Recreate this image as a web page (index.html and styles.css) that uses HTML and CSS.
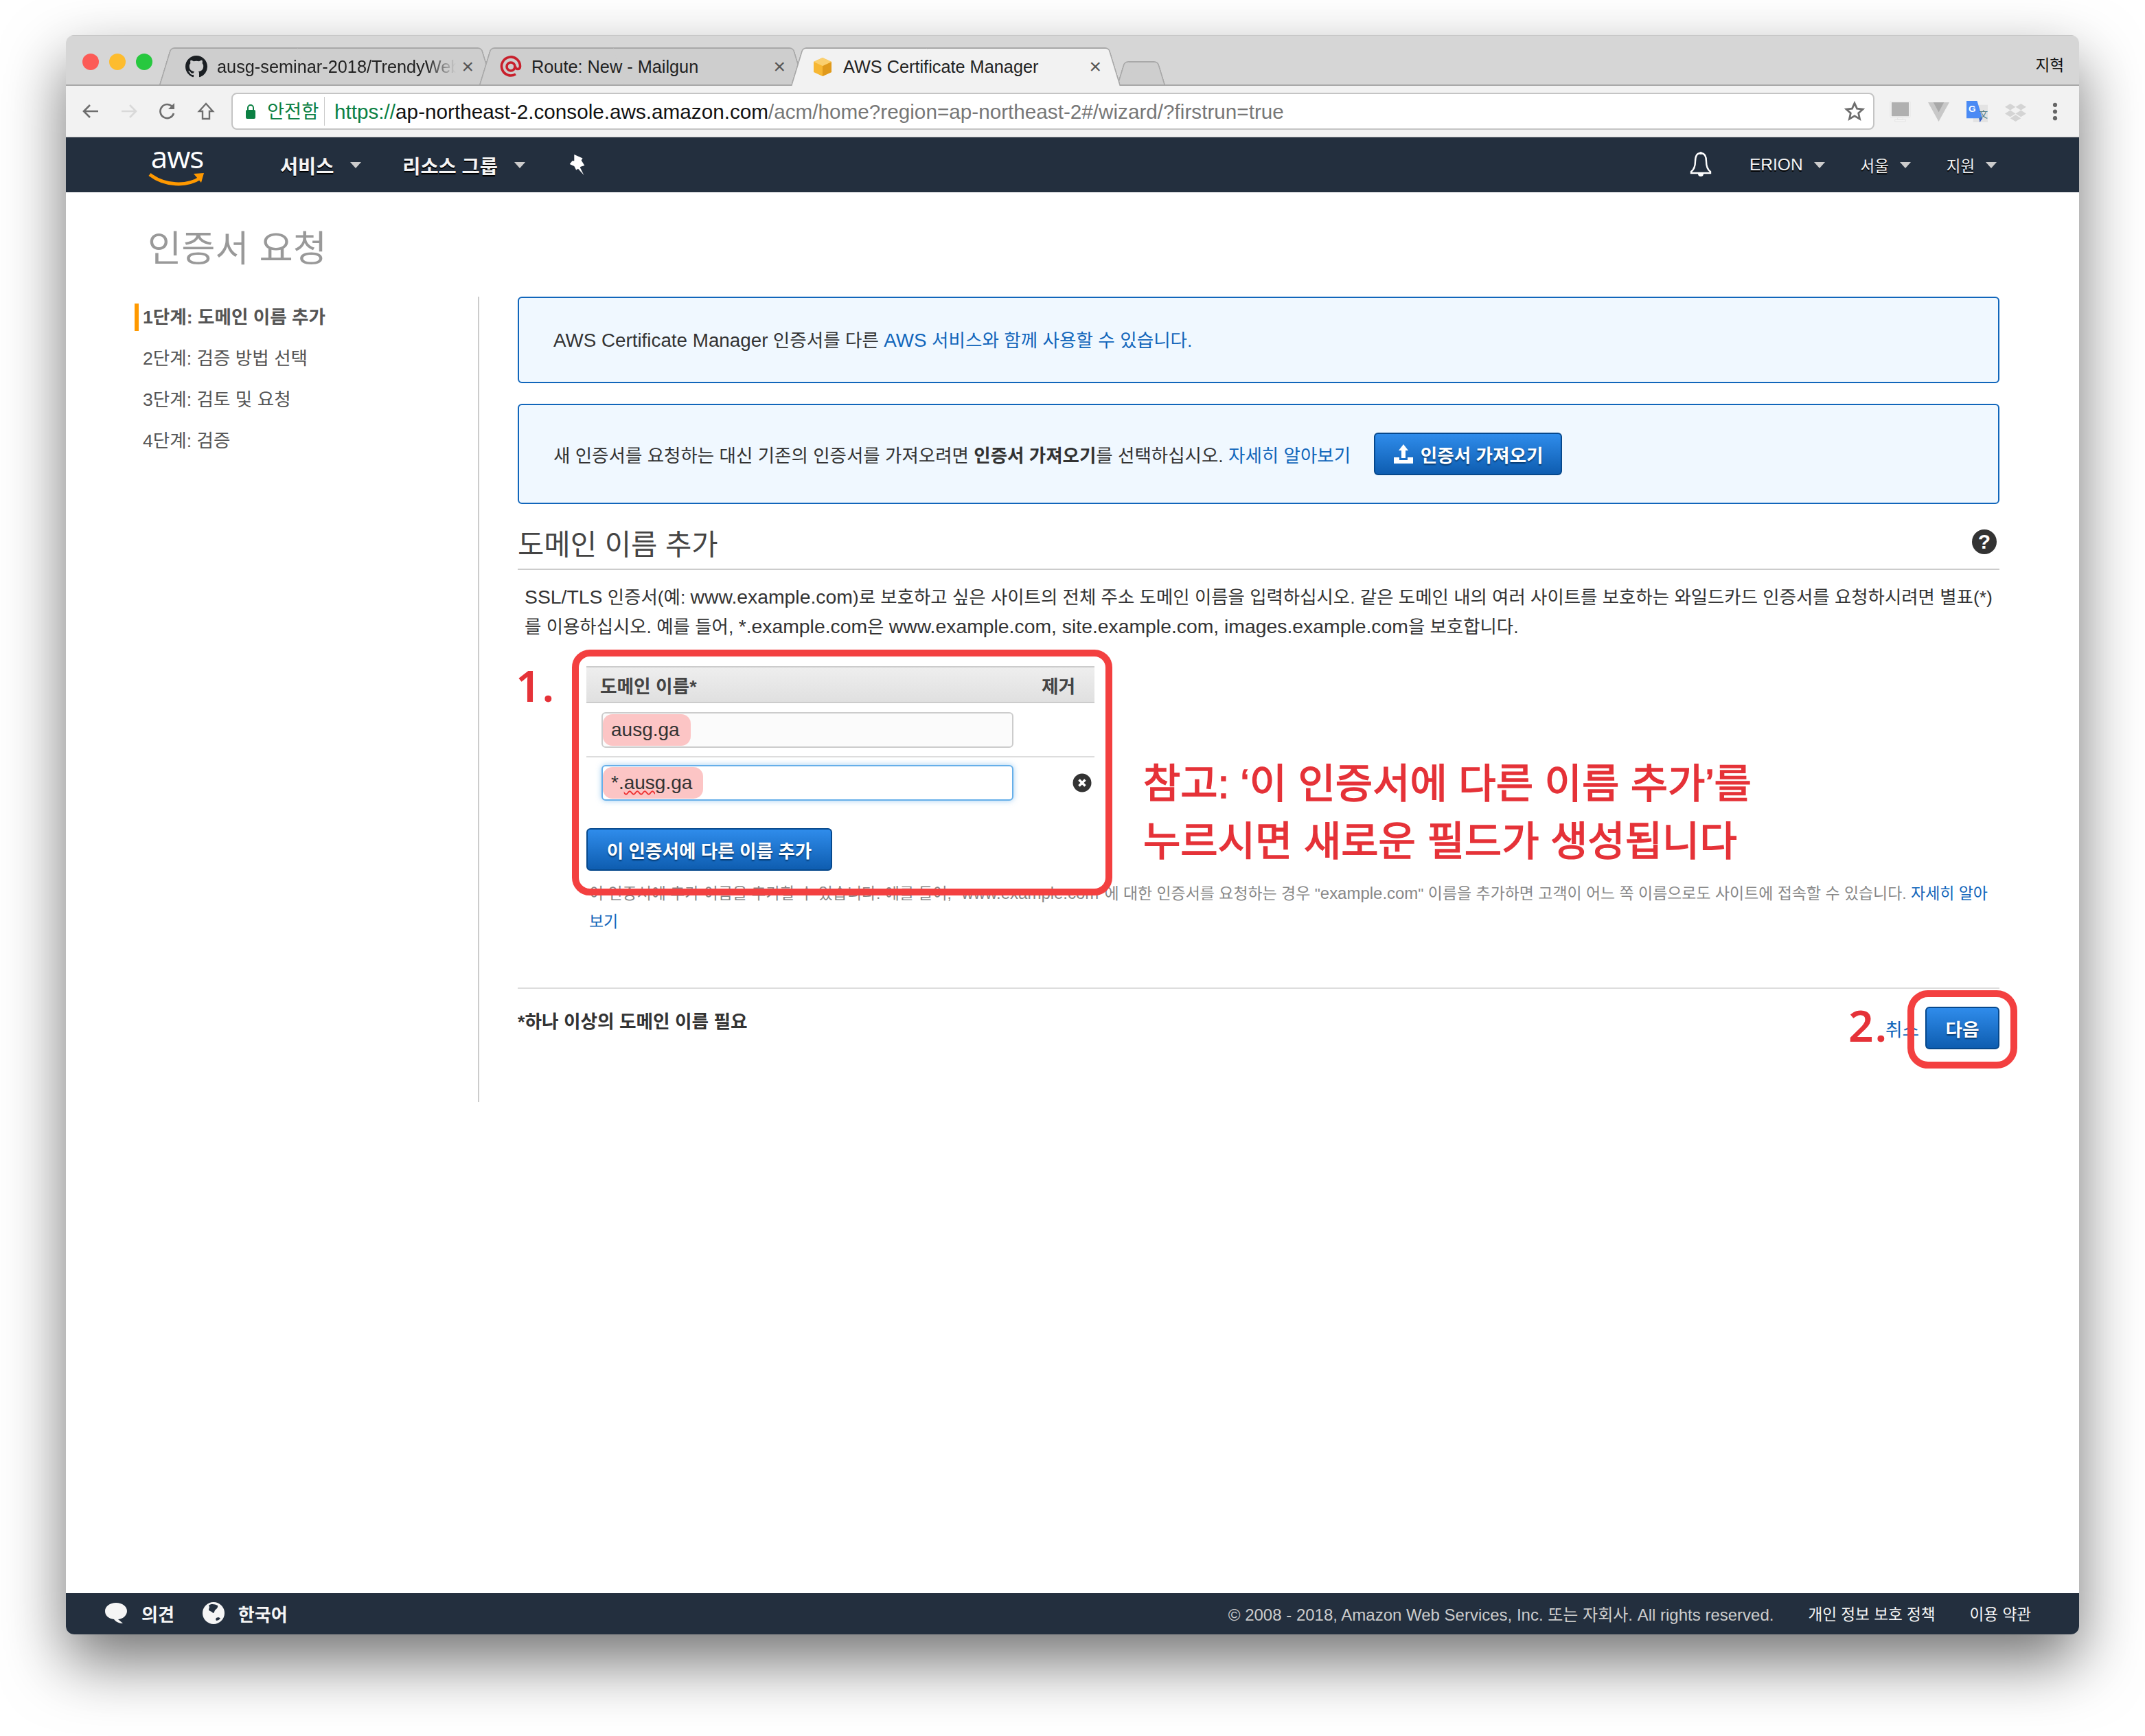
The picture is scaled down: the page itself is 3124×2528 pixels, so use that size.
FILE: index.html
```html
<!DOCTYPE html>
<html lang="ko">
<head>
  <meta charset="UTF-8" />
  <title>인증서 요청</title>
  <link rel="stylesheet" href="styles.css">
</head>
<body>

<div class="window">

  <div class="tabstrip">
    <span class="light red"></span><span class="light yellow"></span><span class="light green"></span>
    <div class="tab tab-one">
      <svg class="favicon" viewBox="0 0 16 16"><path fill="#1b1f23" d="M8 0C3.58 0 0 3.58 0 8c0 3.54 2.29 6.53 5.47 7.59.4.07.55-.17.55-.38v-1.34c-2.23.48-2.7-1.07-2.7-1.07-.36-.92-.89-1.17-.89-1.17-.73-.5.05-.49.05-.49.8.06 1.23.83 1.23.83.71 1.22 1.87.87 2.33.66.07-.52.28-.87.5-1.07-1.78-.2-3.64-.89-3.64-3.95 0-.87.31-1.59.82-2.15-.08-.2-.36-1.02.08-2.12 0 0 .67-.21 2.2.82a7.6 7.6 0 0 1 4 0c1.53-1.04 2.2-.82 2.2-.82.44 1.1.16 1.92.08 2.12.51.56.82 1.27.82 2.15 0 3.07-1.87 3.75-3.65 3.95.29.25.54.73.54 1.48v2.2c0 .21.15.46.55.38A8 8 0 0 0 16 8c0-4.42-3.58-8-8-8z"/></svg>
      <span class="tab-title fade">ausg-seminar-2018/TrendyWeb</span>
      <span class="tab-close">×</span>
    </div>
    <div class="tab tab-two">
      <svg class="favicon" viewBox="0 0 32 32"><path d="M23 27a13.500 13.500 0 1 1 6.500-11.500c0 2.500-1.500 4-3.500 4s-3.500-1.500-3.500-4" fill="none" stroke="#c8202c" stroke-width="3.600"/><circle cx="16" cy="16" r="6" fill="none" stroke="#c8202c" stroke-width="3.600"/></svg>
      <span class="tab-title">Route: New - Mailgun</span>
      <span class="tab-close">×</span>
    </div>
    <div class="tab tab-active">
      <svg class="favicon" viewBox="0 0 32 32"><path fill="#f7b733" d="M16 3 29 9v15l-13 6-13-6V9z"/><path fill="#e09a1c" d="M16 15v15l13-6V9z"/><path fill="#fbd06f" d="M16 3 29 9l-13 6L3 9z"/></svg>
      <span class="tab-title">AWS Certificate Manager</span>
      <span class="tab-close">×</span>
    </div>
    <div class="tab tab-new"></div>
    <span class="profile">지혁</span>
  </div>

  <div class="toolbar">
    <div class="nav-icons">
      <svg viewBox="0 0 28 28"><path d="M25 14H5M13 5l-9 9 9 9" fill="none" stroke="#6e6e6e" stroke-width="2.600"/></svg>
      <svg viewBox="0 0 28 28"><path d="M3 14h20M15 5l9 9-9 9" fill="none" stroke="#d9d9d9" stroke-width="2.600"/></svg>
      <svg viewBox="0 0 28 28"><path d="M23 17a10 10 0 1 1-2-9.500" fill="none" stroke="#6e6e6e" stroke-width="2.600"/><path d="M24 2v9h-9z" fill="#6e6e6e"/></svg>
      <svg viewBox="0 0 28 28"><path d="M14 3 4 14h5v11h10V14h5z" fill="none" stroke="#6e6e6e" stroke-width="2.400"/></svg>
    </div>
    <div class="omnibox">
      <svg class="lock" viewBox="0 0 16 24"><path d="M4 11V7a4 4 0 0 1 8 0v4" fill="none" stroke="#0b8043" stroke-width="2"/><rect x="1" y="10" width="14" height="13" rx="2" fill="#0b8043"/></svg>
      <span class="secure">안전함</span>
      <span class="url"><span class="scheme">https://</span><span class="host">ap-northeast-2.console.aws.amazon.com</span><span class="path">/acm/home?region=ap-northeast-2#/wizard/?firstrun=true</span></span>
      <svg class="star" viewBox="0 0 28 28"><path d="M14 3l3.300 7.400 8 .8-6 5.400 1.700 7.900-7-4.100-7 4.100 1.700-7.900-6-5.400 8-.8z" fill="none" stroke="#6e6e6e" stroke-width="2.600"/></svg>
    </div>
    <div class="extensions">
      <svg viewBox="0 0 32 32"><rect x="1" y="0" width="30" height="25" rx="2" fill="#f7f7f7" stroke="#e4e4e4"/><rect x="3" y="2" width="26" height="21" fill="#b0b0b0"/><path d="M12 25h8v3h-8zM8 28h16v3H8z" fill="#f4f4f4" stroke="#e4e4e4"/></svg>
      <svg viewBox="0 0 32 32"><path d="M0 2h32L16 31z" fill="#c8c8c8"/><path d="M8 2h16l-8 15z" fill="#a8a8a8"/></svg>
      <svg viewBox="0 0 32 32"><path d="M10 6h22v26H10z" fill="#e3e3e3"/><path d="M0 0h16l8 26-4 6-1-6H0z" fill="#4a8af4"/><path d="M19 26h5l-4 6z" fill="#3b5fc4"/><text x="3" y="17" class="ext-g">G</text><text x="19" y="25" class="ext-wen">文</text></svg>
      <svg viewBox="0 0 32 32"><path d="M8 4l8 5-8 5-8-5zM24 4l8 5-8 5-8-5zM8 14l8 5-8 5-8-5zM24 14l8 5-8 5-8-5zM16 21l8 5-8 5-8-5z" fill="#d4d4d4"/></svg>
      <svg class="dots" viewBox="0 0 8 32"><circle cx="4" cy="6" r="3.200" fill="#666"/><circle cx="4" cy="16" r="3.200" fill="#666"/><circle cx="4" cy="26" r="3.200" fill="#666"/></svg>
    </div>
  </div>

  <div class="navbar">
    <div class="aws-logo">
      <span class="aws-word">aws</span>
      <svg viewBox="0 0 84 24"><path d="M2 4c22 17 54 18 74 5" fill="none" stroke="#f90" stroke-width="5"/><path d="M66 3l15-1-4 14z" fill="#f90"/></svg>
    </div>
    <a class="nav-item services">서비스<i class="caret"></i></a>
    <a class="nav-item groups">리소스 그룹<i class="caret"></i></a>
    <svg class="pin" viewBox="0 0 28 34"><path d="M9 1l13 6-2 3 5 8-6 2-1 1 6 12-9-10-3 2-3-6-7-3 4-5 3 0z" fill="#fff"/></svg>
    <div class="nav-right">
      <svg class="bell" viewBox="0 0 34 40"><path d="M17 3c-6 0-8 5-8 12 0 8-2 12-6 15v2h28v-2c-4-3-6-7-6-15 0-7-2-12-8-12z" fill="none" stroke="#fff" stroke-width="2.400"/><path d="M13 33a4 4 0 0 0 8 0z" fill="#fff"/><circle cx="17" cy="3" r="2" fill="#fff"/></svg>
      <a class="nav-item small erion">ERION<i class="caret"></i></a>
      <a class="nav-item small seoul">서울<i class="caret"></i></a>
      <a class="nav-item small support">지원<i class="caret"></i></a>
    </div>
  </div>

  <div class="main">
    <h1 class="page-title">인증서 요청</h1>

    <div class="wizard">
      <ul class="steps">
        <li class="step current">1단계: 도메인 이름 추가</li>
        <li class="step">2단계: 검증 방법 선택</li>
        <li class="step">3단계: 검토 및 요청</li>
        <li class="step">4단계: 검증</li>
      </ul>

      <div class="content">
        <div class="alert alert-first">
          <p><span class="en">AWS Certificate Manager</span> 인증서를 다른 <a><span class="en">AWS</span> 서비스와 함께 사용할 수 있습니다.</a></p>
        </div>
        <div class="alert alert-second">
          <p>새 인증서를 요청하는 대신 기존의 인증서를 가져오려면 <strong>인증서 가져오기</strong>를 선택하십시오. <a>자세히 알아보기</a></p>
          <button class="btn btn-import">
            <svg viewBox="0 0 30 30"><path d="M15 1l7 9h-4v11h-6V10H8z" fill="#fff"/><path d="M1 20h8v4h12v-4h8v9H1z" fill="#fff"/></svg>
            인증서 가져오기
          </button>
        </div>

        <div class="section-head">
          <h2>도메인 이름 추가</h2>
          <span class="help">?</span>
        </div>
        <p class="intro"><span class="en">SSL/TLS</span> 인증서(예: <span class="en">www.example.com</span>)로 보호하고 싶은 사이트의 전체 주소 도메인 이름을 입력하십시오. 같은 도메인 내의 여러 사이트를 보호하는 와일드카드 인증서를 요청하시려면 별표(*)<br>를 이용하십시오. 예를 들어, <span class="en">*.example.com</span>은 <span class="en">www.example.com, site.example.com, images.example.com</span>을 보호합니다.</p>

        <div class="domains">
          <div class="domains-head"><span>도메인 이름*</span><span>제거</span></div>
          <div class="domain-row">
            <div class="field"><span class="mark">ausg.ga</span></div>
          </div>
          <div class="domain-row last">
            <div class="field focused"><span class="mark"><span>*.</span><span class="spell">ausg</span><span>.ga</span></span></div>
            <svg class="remove" viewBox="0 0 28 28"><circle cx="14" cy="14" r="13.500" fill="#333"/><path d="M9.500 9.500l9 9m0-9l-9 9" stroke="#fff" stroke-width="3.600"/></svg>
          </div>
          <button class="btn btn-add">이 인증서에 다른 이름 추가</button>
        </div>

        <p class="hint">이 인증서에 추가 이름을 추가할 수 있습니다. 예를 들어, "<span class="en">www.example.com</span>"에 대한 인증서를 요청하는 경우 "<span class="en">example.com</span>" 이름을 추가하면 고객이 어느 쪽 이름으로도 사이트에 접속할 수 있습니다. <a>자세히 알아<br>보기</a></p>

        <div class="actions">
          <span class="required">*하나 이상의 도메인 이름 필요</span>
          <div class="action-btns">
            <a class="cancel">취소</a>
            <button class="btn btn-next">다음</button>
          </div>
        </div>
      </div>
    </div>

    <div class="callout callout-form"></div>
    <div class="callout callout-next"></div>
    <span class="num num-one">1.</span>
    <span class="num num-two">2.</span>
    <p class="note">참고: ‘이 인증서에 다른 이름 추가’를<br>누르시면 새로운 필드가 생성됩니다</p>
  </div>

  <div class="footer">
    <svg class="foot-icon" viewBox="0 0 34 32"><path d="M17 1c9 0 16 5 16 12s-7 12-13 12l7 6c-5 0-10-2-13-6C6 24 1 20 1 13 1 6 8 1 17 1z" fill="#f5f5f5"/></svg>
    <span class="foot-label feedback">의견</span>
    <svg class="foot-icon globe" viewBox="0 0 32 32"><circle cx="16" cy="16" r="16" fill="#f5f5f5"/><path d="M9 5c3-3 9-2 13 0 1 3-2 5-4 7-1 2-1 4-3 4-1-3-5-2-6-5 0-2 2-3 0-6zM20 23c2-1 5-1 6 1-2 2-4 3-6 3-1-1-1-3 0-4z" fill="#232f3e"/></svg>
    <span class="foot-label">한국어</span>
    <span class="copyright">© 2008 - 2018, Amazon Web Services, Inc. 또는 자회사. All rights reserved.</span>
    <a class="foot-link privacy">개인 정보 보호 정책</a>
    <a class="foot-link">이용 약관</a>
  </div>

</div>

</body>
</html>
```

FILE: styles.css
```css
* {
  box-sizing: border-box;
}
html, body {
  margin: 0;
  background: #fff;
}
body {
  height: 2528px;
  padding: 51px 96px 0 96px;
  overflow: hidden;
  font-family: "Liberation Sans", "Noto Sans CJK KR", sans-serif;
  color: #444;
}
p, h1, h2, ul {
  margin: 0;
  padding: 0;
}
a {
  color: #1166bb;
}

/* browser window */
.window {
  width: 2932px;
  height: 2329px;
  display: flex;
  flex-direction: column;
  border-radius: 12px;
  overflow: hidden;
  box-shadow: 0 40px 90px rgba(0, 0, 0, .55);
}
.tabstrip {
  height: 74px;
  flex: none;
  display: flex;
  align-items: flex-end;
  padding-left: 24px;
  background: #d6d6d6;
  border-top: 1px solid #c4c4c4;
  border-bottom: 2px solid #a8a8a8;
  position: relative;
}
.light {
  width: 24px;
  height: 24px;
  border-radius: 50%;
  margin: 0 15px 21px 0;
}
.red { background: #fc5b57; }
.yellow { background: #fdbc2e; }
.green { background: #27c83f; margin-right: 0; }
.tab {
  position: relative;
  height: 56px;
  margin-bottom: -2px;
  display: flex;
  align-items: center;
  font-size: 25.300px;
  color: #222;
  padding: 0 28px 0 30px;
}
.tab::before,
.tab::after {
  content: "";
  position: absolute;
  top: 0;
  bottom: 2px;
  width: 55%;
  background: #cecece;
  border-top: 2px solid #a8a8a8;
  z-index: 0;
}
.tab::before {
  left: 8px;
  transform: skewX(-17deg);
  border-left: 2px solid #a8a8a8;
  border-radius: 6px 0 0 0;
}
.tab::after {
  right: 8px;
  transform: skewX(17deg);
  border-right: 2px solid #a8a8a8;
  border-radius: 0 6px 0 0;
}
.tab > * {
  position: relative;
  z-index: 1;
}
.tab-one {
  width: 486px;
  margin-left: 10px;
  padding-left: 38px;
}
.tab-two {
  width: 474px;
  margin-left: -20px;
}
.tab-active {
  width: 480px;
  margin-left: -20px;
  z-index: 2;
}
.tab-active::before,
.tab-active::after {
  background: #f2f2f2;
  bottom: 0;
}
.tab-new {
  width: 76px;
  height: 36px;
  margin-left: -8px;
  padding: 0;
}
.favicon {
  width: 32px;
  height: 32px;
  flex: none;
  margin-right: 14px;
}
.tab-title {
  flex: 1;
  white-space: nowrap;
  overflow: hidden;
}
.fade {
  -webkit-mask-image: linear-gradient(to right, #000 88%, transparent);
  mask-image: linear-gradient(to right, #000 88%, transparent);
}
.tab-close {
  width: 26px;
  text-align: right;
  font-size: 30px;
  color: #555;
}
.profile {
  position: absolute;
  right: 22px;
  top: 25px;
  font-size: 22.600px;
  color: #111;
}

/* toolbar */
.toolbar {
  height: 74px;
  flex: none;
  display: flex;
  align-items: center;
  background: #f2f2f2;
}
.nav-icons {
  width: 241px;
  display: flex;
  gap: 28px;
  padding-left: 22px;
}
.nav-icons svg {
  width: 28px;
  height: 28px;
}
.omnibox {
  width: 2393px;
  height: 54px;
  display: flex;
  align-items: center;
  background: #fff;
  border: 2px solid #c4c4c4;
  border-radius: 8px;
  padding-left: 18px;
  font-size: 29.700px;
}
.lock {
  width: 16px;
  height: 24px;
  margin-right: 16px;
}
.secure {
  color: #0b8043;
  width: 84px;
  height: 42px;
  line-height: 43px;
  font-size: 27.300px;
  border-right: 1px solid #ccc;
}
.url {
  flex: 1;
  margin-left: 14px;
  padding-top: 2px;
  white-space: nowrap;
}
.scheme { color: #0b8043; }
.host { color: #111; }
.path { color: #777; }
.star {
  width: 30px;
  height: 30px;
  margin-right: 12px;
}
.extensions {
  flex: 1;
  display: flex;
  align-items: center;
  gap: 25px;
  padding-left: 22px;
}
.extensions svg {
  width: 31px;
  height: 31px;
}
.extensions .dots {
  width: 8px;
  margin-left: 13px;
}
.ext-g {
  font: bold 14px "Liberation Sans", sans-serif;
  fill: #fff;
}
.ext-wen {
  font: 13px "Noto Sans CJK KR", sans-serif;
  fill: #55808a;
}

/* aws navbar */
.navbar {
  height: 81px;
  flex: none;
  display: flex;
  align-items: center;
  background: #232f3e;
  border-top: 1px solid #d0d0d0;
  padding-left: 120px;
  position: relative;
}
.aws-logo {
  width: 84px;
  height: 68px;
  display: flex;
  flex-direction: column;
  align-items: center;
  color: #fff;
}
.aws-word {
  font: 44px/44px "Open Sans", sans-serif;
  letter-spacing: -1px;
}
.aws-logo svg {
  width: 84px;
  height: 24px;
}
.nav-item {
  color: #f5f5f5;
  font-size: 28.400px;
  font-weight: bold;
  text-shadow: 0 2px 0 #000;
  display: flex;
  align-items: center;
  white-space: nowrap;
}
.caret {
  display: inline-block;
  width: 0;
  height: 0;
  margin-left: 24px;
  border-left: 8px solid transparent;
  border-right: 8px solid transparent;
  border-top: 9px solid #ccc;
}
.services { margin-left: 108px; }
.groups { margin-left: 60px; }
.pin {
  width: 28px;
  height: 32px;
  margin-left: 62px;
}
.nav-right {
  margin-left: auto;
  display: flex;
  align-items: center;
  padding-right: 120px;
}
.bell {
  width: 34px;
  height: 40px;
  margin-right: 54px;
}
.nav-item.small {
  font-size: 22.400px;
  font-weight: normal;
}
.nav-item.small .caret {
  margin-left: 16px;
}
.nav-item.erion {
  font-size: 24.500px;
}
.seoul,
.support { margin-left: 52px; }

/* page */
.main {
  flex: 1;
  position: relative;
  background: #fff;
}
.page-title {
  padding: 53px 0 0 119px;
  height: 152px;
  font-size: 53.500px;
  line-height: 60px;
  font-weight: normal;
  color: #999;
}
.wizard {
  display: flex;
  align-items: flex-start;
}
.steps {
  width: 602px;
  height: 1173px;
  flex: none;
  list-style: none;
  border-right: 2px solid #ccc;
  padding: 8px 0 0 100px;
}
.step {
  height: 60px;
  line-height: 40px;
  padding: 0 0 0 12px;
  font-size: 26.600px;
  color: #555;
}
.step.current {
  font-weight: bold;
  border-left: 6px solid #f90;
  height: 40px;
  padding-left: 6px;
  margin-bottom: 20px;
  margin-top: 2px;
}
.content {
  width: 2158px;
  margin-left: 56px;
}
.en {
  font-size: 1.045em;
}
.alert {
  display: flex;
  align-items: center;
  background: #f0f8ff;
  border: 2px solid #1166bb;
  border-radius: 6px;
  padding: 0 50px;
  font-size: 26.600px;
  color: #333;
}
.alert-first {
  height: 126px;
  margin-bottom: 30px;
  padding-bottom: 4px;
}
.alert-second {
  height: 146px;
  font-size: 26.500px;
}
.btn {
  display: inline-flex;
  align-items: center;
  justify-content: center;
  border: 2px solid #06488c;
  border-radius: 6px;
  background: linear-gradient(#2f8ceb, #0e5db0);
  color: #fff;
  font: bold 26.600px "Liberation Sans", "Noto Sans CJK KR", sans-serif;
  text-shadow: 0 2px 2px #063a70;
  padding: 0;
}
.btn-import {
  width: 274px;
  height: 62px;
  margin-left: 34px;
  gap: 10px;
}
.btn-import svg {
  width: 30px;
  height: 30px;
}
.section-head {
  height: 96px;
  display: flex;
  align-items: flex-end;
  justify-content: space-between;
  border-bottom: 2px solid #ccc;
  padding: 0 4px 4px 0;
}
.section-head h2 {
  font-size: 41.700px;
  line-height: 60px;
  font-weight: normal;
  color: #444;
}
.help {
  width: 36px;
  height: 36px;
  border-radius: 50%;
  background: #333;
  color: #fff;
  font-size: 30px;
  font-weight: bold;
  line-height: 36px;
  text-align: center;
  margin-bottom: 17px;
}
.intro {
  margin-top: 18px;
  padding: 0 0 0 10px;
  font-size: 26.450px;
  line-height: 42px;
  color: #333;
  white-space: nowrap;
}
.intro .en {
  font-size: 1.072em;
}
.domains {
  width: 740px;
  margin: 36px 0 0 100px;
}
.domains-head {
  height: 54px;
  display: flex;
  align-items: center;
  justify-content: space-between;
  padding: 0 28px 0 20px;
  background: linear-gradient(#eeeeee, #e0e0e0);
  border-top: 2px solid #ccc;
  border-bottom: 2px solid #ccc;
  font-size: 26.700px;
  font-weight: bold;
  color: #444;
}
.domain-row {
  height: 79px;
  display: flex;
  align-items: center;
  padding: 0 0 0 22px;
  border-bottom: 2px solid #ddd;
  position: relative;
}
.domain-row.last {
  border-bottom: 0;
  height: 74px;
}
.field {
  width: 600px;
  height: 52px;
  display: flex;
  align-items: center;
  padding-left: 0;
  background: #fbfbfb;
  border: 2px solid #ccc;
  border-radius: 6px;
}
.field.focused {
  background: #fff;
  border-color: #66afe9;
  box-shadow: 0 0 8px rgba(102, 175, 233, .6);
}
.mark {
  height: 46px;
  line-height: 46px;
  padding: 0 16px 0 12px;
  background: #fcc5c5;
  border-radius: 14px;
  font-size: 28px;
  color: #333;
  white-space: nowrap;
}
.spell {
  text-decoration: underline wavy #e33 2px;
  text-underline-offset: 2px;
}
.remove {
  position: absolute;
  left: 708px;
  top: 23px;
  width: 28px;
  height: 28px;
}
.btn-add {
  width: 358px;
  height: 62px;
  margin-top: 29px;
}
.hint {
  margin: 12px 0 0 104px;
  font-size: 22.950px;
  line-height: 41px;
  color: #888;
  white-space: nowrap;
}
.actions {
  margin-top: 75px;
  border-top: 2px solid #ddd;
  display: flex;
  justify-content: space-between;
  padding-top: 26px;
}
.required {
  font-size: 26.700px;
  font-weight: bold;
  color: #333;
  line-height: 40px;
  margin-top: 2px;
}
.action-btns {
  display: flex;
  align-items: center;
  gap: 9px;
}
.cancel {
  font-size: 26.700px;
}
.btn-next {
  width: 108px;
  height: 62px;
}

/* red notes drawn over the page */
.callout {
  position: absolute;
  border: 10px solid #f34040;
  border-radius: 26px;
}
.callout-form {
  left: 737px;
  top: 666px;
  width: 787px;
  height: 358px;
}
.callout-next {
  left: 2682px;
  top: 1162px;
  width: 160px;
  height: 114px;
  border-radius: 30px;
}
.num {
  position: absolute;
  font-family: "Noto Sans", sans-serif;
  font-size: 64px;
  line-height: 70px;
  font-weight: 600;
  letter-spacing: 2px;
  color: #e53238;
}
.num-one {
  left: 655px;
  top: 683px;
}
.num-two {
  left: 2596px;
  top: 1178px;
}
.note {
  position: absolute;
  left: 1569px;
  top: 820px;
  font-size: 59.100px;
  line-height: 84px;
  -webkit-text-stroke: 1.600px #e53238;
  color: #e53238;
  white-space: nowrap;
}

/* console footer */
.footer {
  height: 60px;
  flex: none;
  display: flex;
  align-items: center;
  background: #232f3e;
  color: #f5f5f5;
  padding: 0 70px 2px 56px;
  font-size: 26px;
}
.foot-icon {
  width: 34px;
  height: 32px;
}
.foot-label {
  font-weight: bold;
  font-size: 26px;
  margin-left: 20px;
}
.feedback {
  margin-right: 41px;
}
.globe {
  width: 32px;
}
.copyright {
  margin-left: auto;
  font-size: 24px;
  color: #ccc;
}
.foot-link {
  color: #f5f5f5;
  font-size: 22.600px;
  margin-left: 50px;
}
```
